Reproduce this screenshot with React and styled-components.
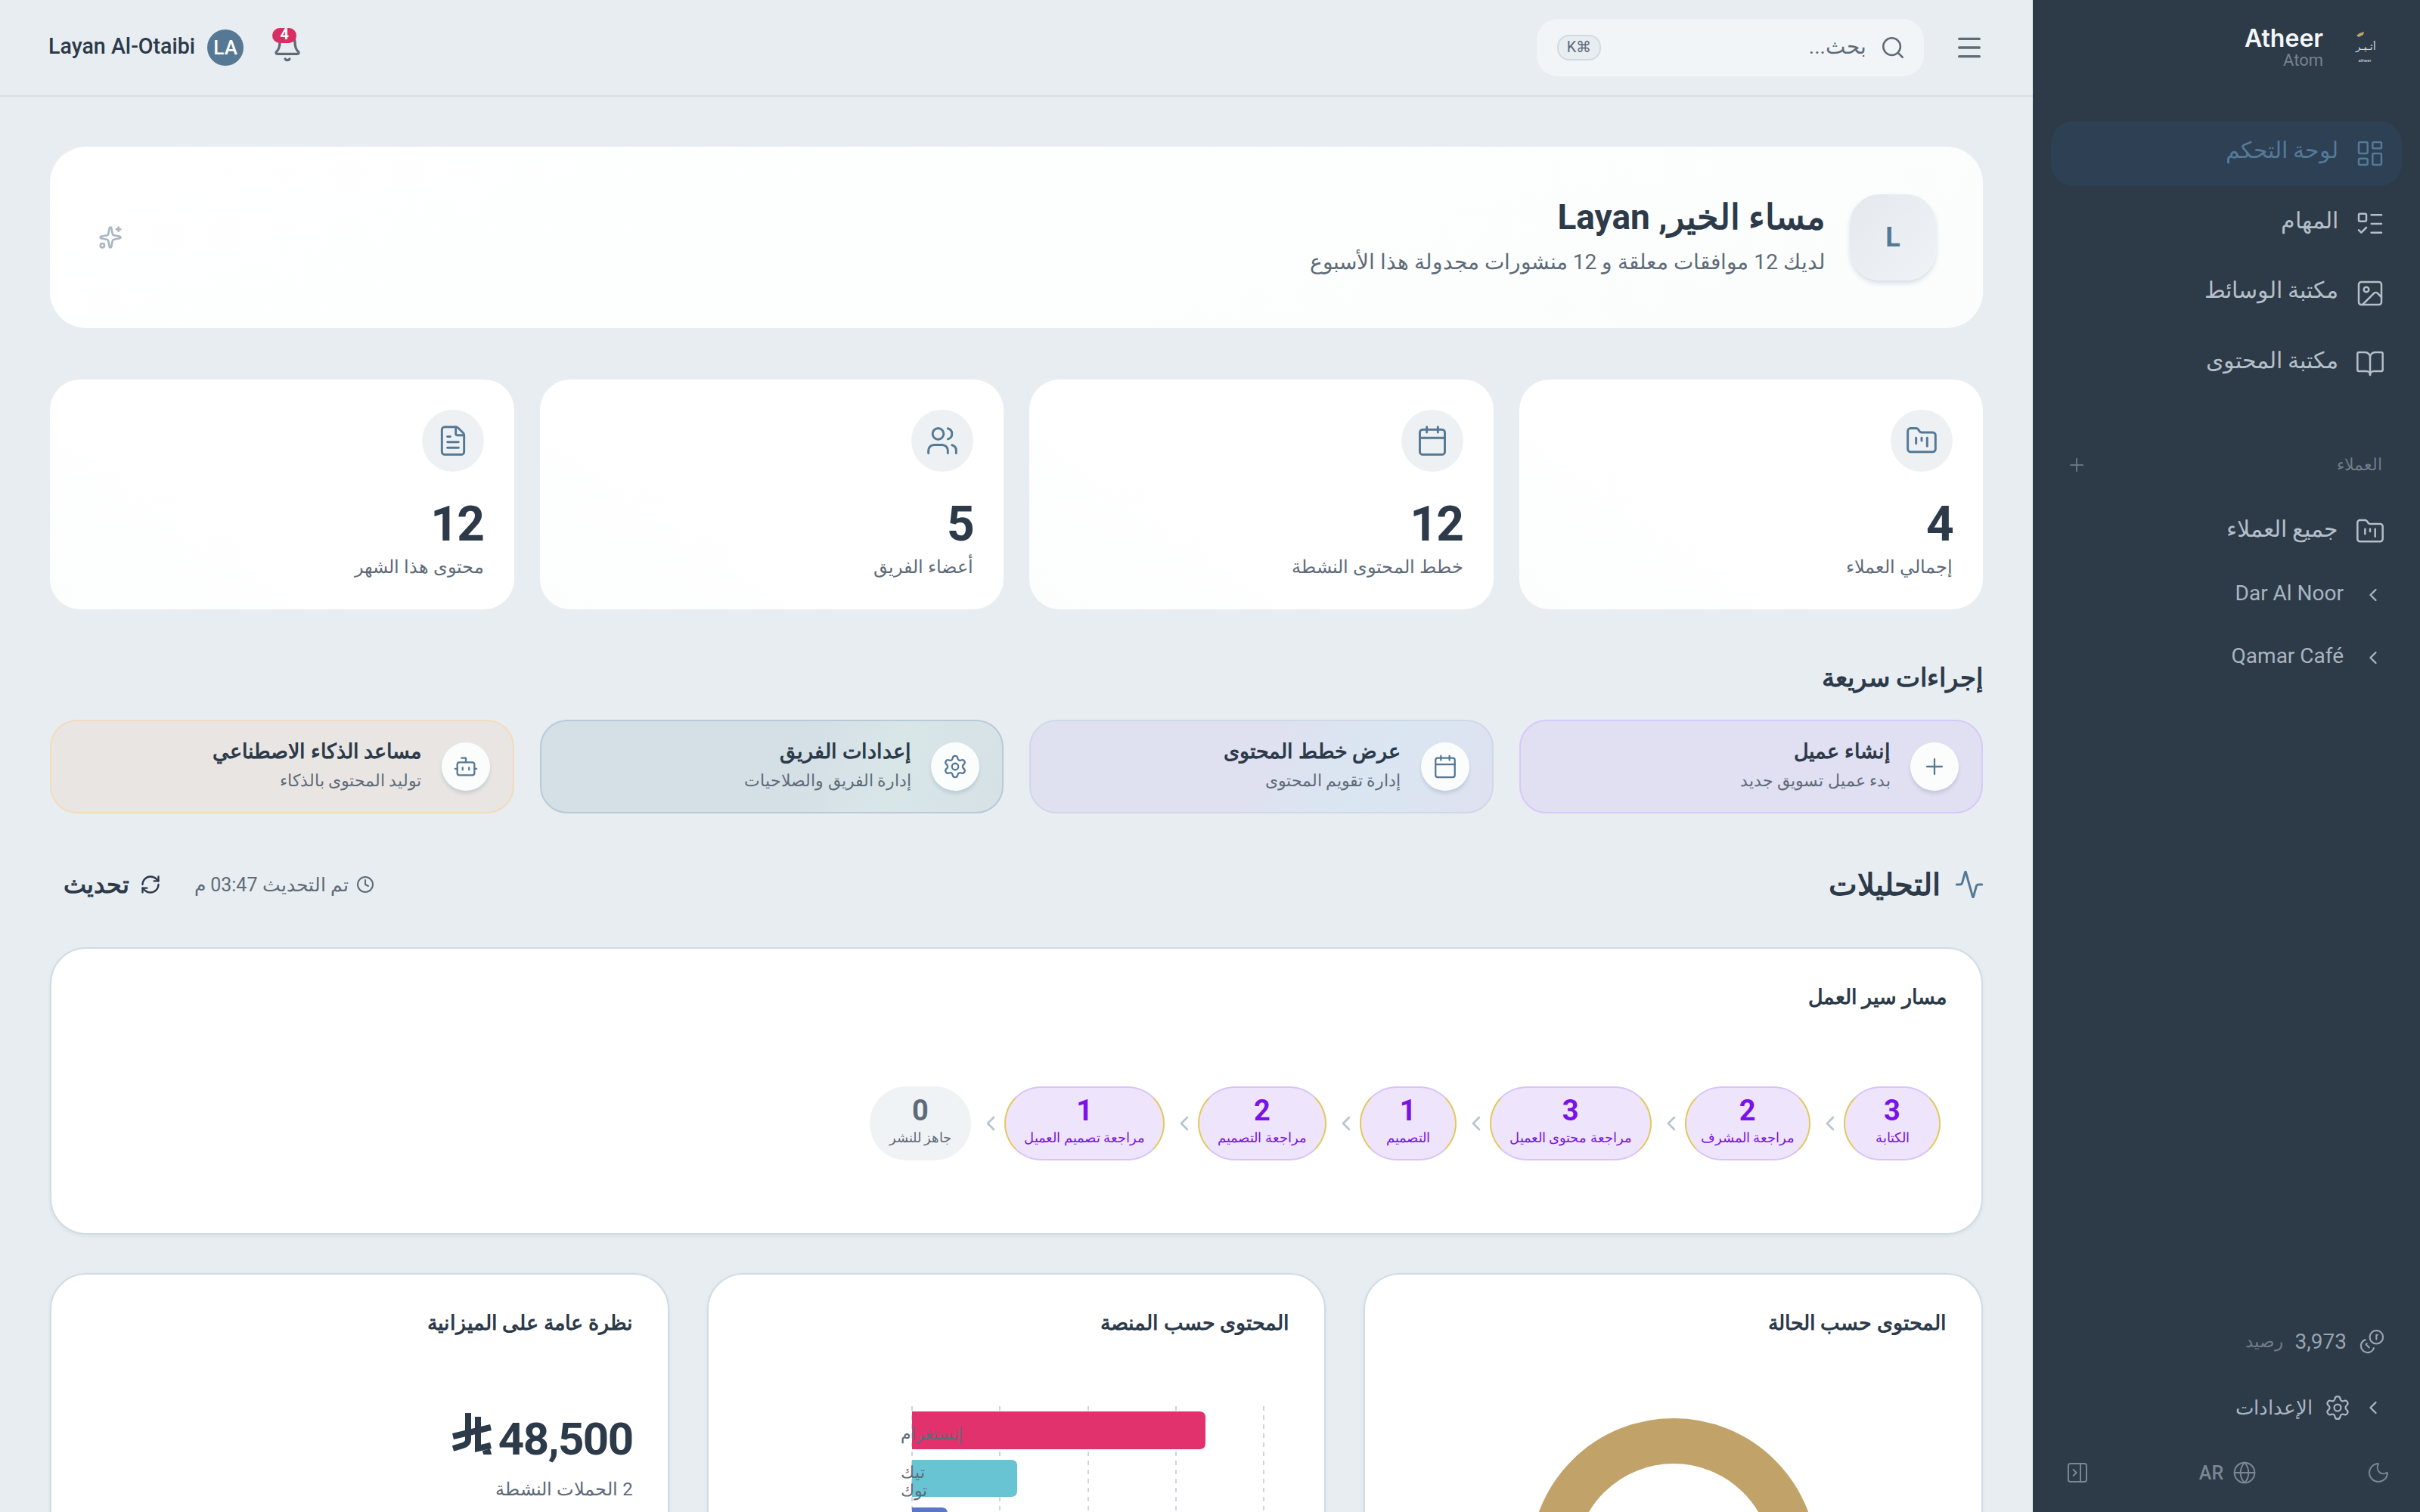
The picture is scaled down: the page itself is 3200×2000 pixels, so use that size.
import React from "react";
import styled, { createGlobalStyle } from "styled-components";
import {
  Activity, Bell, BookOpen, Bot, Calendar, ChevronLeft, Clock, Coins, FileText, FolderKanban,
  Globe, Image as ImageIcon, LayoutDashboard, ListTodo, Menu, Moon, PanelRightClose, Plus,
  RefreshCw, Search, Settings, Sparkles, Users,
} from "lucide-react";

const GlobalStyle = createGlobalStyle`
  html, body { margin: 0; padding: 0; }
  body {
    background: #e8edf1;
    color: #2c3a49;
    font-family: Roboto, sans-serif;
  }
  * { box-sizing: border-box; }
`;

const Shell = styled.div`
  direction: rtl;
  display: flex;
  width: 3200px;
  height: 2000px;
  overflow: hidden;
`;

/* sidebar */
const Sidebar = styled.aside`
  flex: 0 0 512px;
  display: flex;
  flex-direction: column;
  height: 100%;
  background: #2d3a48;
  color: #b4bfc8;
  padding: 0 24px;
`;
const Brand = styled.div`
  display: flex;
  align-items: flex-start;
  gap: 34px;
  height: 160px;
  padding: 36px 30px 0 0;
`;
const BrandText = styled.div`
  display: flex;
  flex-direction: column;
`;
const BrandName = styled.div`
  font-family: Inter, sans-serif;
  font-size: 32px;
  font-weight: 600;
  line-height: 30px;
  color: #f4f6f8;
`;
const BrandSub = styled.div`
  font-size: 22px;
  line-height: 26px;
  margin-top: 1px;
  color: #76838e;
`;
const NavList = styled.nav`
  display: flex;
  flex-direction: column;
  gap: 6.6px;
`;
const NavItem = styled.div`
  display: flex;
  align-items: center;
  gap: 22px;
  height: 86px;
  padding: 0 22px 0 0;
  border-radius: 30px;
  font-size: 29.5px;
  background: ${(p) => (p.$active ? "#2e4053" : "transparent")};
  color: ${(p) => (p.$active ? "#547a99" : "#b4bfc8")};
`;
const NavLabel = styled.span`
  margin-top: -8px;
`;
const ClientLabel = styled.span`
  margin-top: -6px;
`;
const GroupHead = styled.div`
  display: flex;
  align-items: center;
  justify-content: space-between;
  margin: 71px 0 25px;
  height: 40px;
  padding: 0 26px 0 20px;
  font-size: 22px;
  color: #6f7c88;
`;
const ClientRow = styled.div`
  display: flex;
  align-items: center;
  gap: 25px;
  height: 83px;
  padding-right: 24px;
  font-size: 28px;
  color: #a9b5c0;
`;
const SidebarBottom = styled.div`
  margin-top: auto;
  display: flex;
  flex-direction: column;
`;
const Credit = styled.div`
  display: flex;
  align-items: center;
  gap: 16px;
  padding-right: 22px;
  height: 40px;
  font-size: 28px;
  color: #98a4af;
`;
const CreditIcon = styled(Coins)`
  transform: scaleX(-1);
`;
const CreditLabel = styled.span`
  font-size: 23px;
  color: #6f7c88;
`;
const SettingsRow = styled.div`
  display: flex;
  align-items: center;
  gap: 15px;
  padding-right: 24px;
  margin-top: 48px;
  height: 40px;
  font-size: 26px;
  color: #a9b5c0;
`;
const SidebarFoot = styled.div`
  display: flex;
  align-items: center;
  justify-content: space-between;
  margin: 48px 0 34px;
  padding: 0 15px 0 19px;
  height: 36px;
  color: #7a8793;
`;
const LangSwitch = styled.div`
  display: flex;
  align-items: center;
  gap: 12px;
  font-size: 25px;
  font-weight: 500;
`;

/* main column */
const Main = styled.main`
  flex: 1;
  min-width: 0;
  display: flex;
  flex-direction: column;
`;
const Topbar = styled.header`
  flex: 0 0 128px;
  display: flex;
  align-items: center;
  justify-content: space-between;
  padding: 0 64px;
  border-bottom: 2px solid #d3dfe7;
`;
const TopRight = styled.div`
  display: flex;
  align-items: center;
  gap: 40px;
`;
const SearchBox = styled.div`
  display: flex;
  align-items: center;
  gap: 18px;
  width: 512px;
  height: 76px;
  padding: 0 24px 0 27px;
  border-radius: 28px;
  background: #f2f5f8;
  color: #5e6b78;
  font-size: 28px;
`;
const SearchText = styled.span`
  margin-top: -4px;
`;
const Kbd = styled.span`
  margin-right: auto;
  display: flex;
  justify-content: center;
  width: 58px;
  height: 34px;
  padding-top: 2px;
  border: 2px solid #cfdbe3;
  border-radius: 16px;
  background: #e8edf1;
  font-size: 20px;
  line-height: 24px;
`;
const TopUser = styled.div`
  display: flex;
  align-items: center;
  gap: 38px;
`;
const BellWrap = styled.div`
  position: relative;
  display: flex;
  width: 40px;
  height: 40px;
  color: #5e6b78;
`;
const BellBadge = styled.span`
  position: absolute;
  top: -6px;
  right: 8px;
  width: 32px;
  height: 20px;
  border-radius: 10px;
  background: #d92d63;
  color: #fff;
  font-size: 20px;
  font-weight: 700;
  line-height: 16px;
  text-align: center;
`;
const UserChip = styled.div`
  display: flex;
  align-items: center;
  gap: 16px;
  font-size: 28.6px;
  font-weight: 500;
`;
const UserName = styled.span`
  margin-top: -4px;
`;
const Avatar = styled.div`
  display: flex;
  align-items: center;
  justify-content: center;
  width: 48px;
  height: 48px;
  border-radius: 50%;
  background: #557894;
  color: #fff;
  font-size: 26px;
`;
const Content = styled.div`
  display: flex;
  flex-direction: column;
  padding: 66px 66px 0;
`;
const Hero = styled.section`
  display: flex;
  align-items: center;
  justify-content: space-between;
  height: 240px;
  padding: 0 62px 0 64px;
  border-radius: 48px;
  background: linear-gradient(160deg, #fff, #fbfdfd);
  color: #a9b6c4;
`;
const HeroMain = styled.div`
  display: flex;
  align-items: center;
  gap: 32px;
`;
const HeroBadge = styled.div`
  display: flex;
  align-items: center;
  justify-content: center;
  width: 114px;
  height: 114px;
  border-radius: 40px;
  background: linear-gradient(135deg, #e4e9ee, #eff3f6);
  box-shadow: 0 4px 6px rgba(85, 120, 148, 0.22);
  color: #557894;
  font-size: 36px;
  font-weight: 700;
`;
const HeroTitle = styled.h1`
  margin: -4px 0 0;
  font-size: 46px;
  font-weight: 700;
  line-height: 60px;
  color: #2c3a49;
`;
const HeroSub = styled.p`
  margin: 10px 0 0;
  font-size: 28.2px;
  line-height: 40px;
  color: #5e6b78;
`;
const StatGrid = styled.div`
  display: grid;
  grid-template-columns: repeat(4, 1fr);
  gap: 34px;
  margin-top: 68px;
`;
const StatCard = styled.div`
  height: 304px;
  padding: 40px;
  border-radius: 40px;
  background: linear-gradient(215deg, #fff 60%, #fcfdfd);
`;
const StatIcon = styled.div`
  display: flex;
  align-items: center;
  justify-content: center;
  width: 82px;
  height: 82px;
  border-radius: 50%;
  background: #edf1f4;
  color: #557894;
`;
const StatValue = styled.div`
  margin-top: 32px;
  font-size: 64px;
  font-weight: 700;
  letter-spacing: -0.025em;
  line-height: 76px;
`;
const StatLabel = styled.div`
  margin-top: -2px;
  font-size: 24px;
  line-height: 40px;
  color: #5e6b78;
`;
const SectionTitle = styled.h2`
  margin: 66px 0 32px;
  height: 48px;
  font-size: 34px;
  font-weight: 700;
  line-height: 48px;
`;
const ActionGrid = styled.div`
  display: grid;
  grid-template-columns: repeat(4, 1fr);
  gap: 34px;
`;
const ActionCard = styled.div`
  display: flex;
  align-items: center;
  gap: 26px;
  height: 124px;
  padding: 0 30px;
  border: 2px solid ${(p) => p.$border};
  border-radius: 36px;
  background: ${(p) => p.$bg};
`;
const ActionIcon = styled.div`
  flex: 0 0 64px;
  display: flex;
  align-items: center;
  justify-content: center;
  height: 64px;
  border-radius: 50%;
  background: #fbfcfc;
  box-shadow: 0 4px 4px rgba(85, 120, 148, 0.2);
  color: #557894;
`;
const ActionTitle = styled.div`
  margin-top: -4px;
  font-size: 26.5px;
  font-weight: 600;
  line-height: 36px;
`;
const ActionSub = styled.div`
  margin-top: 6px;
  font-size: 22px;
  line-height: 30px;
  color: #5e6b78;
`;
const AnalyticsHead = styled.div`
  display: flex;
  align-items: center;
  justify-content: space-between;
  height: 64px;
  margin: 62px 0 51px;
`;
const AnalyticsTitle = styled.div`
  display: flex;
  align-items: center;
  gap: 18px;
  margin-right: -2px;
  font-size: 40px;
  font-weight: 700;
  color: #2c3a49;
`;
const AnalyticsTools = styled.div`
  display: flex;
  align-items: center;
  gap: 44px;
  padding-left: 18px;
`;
const UpdatedAt = styled.div`
  display: flex;
  align-items: center;
  gap: 10px;
  font-size: 25px;
  color: #5e6b78;
`;
const RefreshButton = styled.div`
  display: flex;
  align-items: center;
  gap: 14px;
  font-size: 32px;
  font-weight: 600;
`;
const Panel = styled.section`
  padding: 48px 46px;
  border: 2px solid #d0dce4;
  border-radius: 48px;
  background: #fff;
  box-shadow: 0 2px 4px rgba(85, 120, 148, 0.1);
`;
const WorkflowPanel = styled(Panel)`
  height: 380px;
`;
const PanelTitle = styled.h3`
  margin: -2px 0 2px;
  font-size: 27px;
  font-weight: 600;
  line-height: 36px;
`;
const Pipeline = styled.div`
  display: flex;
  align-items: center;
  gap: 6px;
  margin-top: 100px;
  padding-right: 8px;
  color: #b7c5cf;
`;
const PipeArrow = styled(ChevronLeft)`
  margin: 0 -4px 0 4px;
`;
const Stage = styled.div`
  display: flex;
  flex-direction: column;
  align-items: center;
  justify-content: center;
  min-width: 128px;
  height: 98px;
  padding: 0 ${(p) => (p.$tight ? "19px" : "24px")} 6px;
  border: 2px solid ${(p) => (p.$muted ? "#f0f3f6" : "#d8c4fa")};
  border-left-color: ${(p) => (p.$muted ? "#f0f3f6" : "#e3c85c")};
  border-right-color: ${(p) => (p.$muted ? "#f0f3f6" : "#e3c85c")};
  border-radius: 49px;
  background: ${(p) => (p.$muted ? "#f0f3f6" : "#eee5fc")};
  color: ${(p) => (p.$muted ? "#5e6b78" : "#7a12e8")};
`;
const StageCount = styled.div`
  font-size: 38px;
  font-weight: 700;
  line-height: 44px;
`;
const StageLabel = styled.div`
  font-size: 18px;
  line-height: 28px;
`;
const BottomGrid = styled.div`
  display: grid;
  grid-template-columns: repeat(3, 1fr);
  gap: 50px;
  margin-top: 51px;
`;
const ChartPanel = styled(Panel)`
  height: 700px;
`;
const BudgetValue = styled.div`
  display: flex;
  align-items: center;
  gap: 8px;
  margin-top: 98px;
  font-size: 60px;
  font-weight: 700;
  letter-spacing: -0.025em;
  line-height: 76px;
`;
const BudgetSign = styled.svg`
  margin-bottom: 16px;
`;
const BudgetNote = styled.div`
  margin-top: 12px;
  font-size: 24px;
  line-height: 32px;
  color: #5e6b78;
`;
const ChartArea = styled.div`
  display: flex;
  justify-content: center;
  margin-top: ${(p) => p.$top}px;
  direction: ltr;
`;
const AxisLabel = styled.text`
  direction: rtl;
  font-size: 22px;
  fill: #5e6b78;
`;

const navItems = [
  { label: "لوحة التحكم", Icon: LayoutDashboard, active: true },
  { label: "المهام", Icon: ListTodo },
  { label: "مكتبة الوسائط", Icon: ImageIcon },
  { label: "مكتبة المحتوى", Icon: BookOpen },
];

const stats = [
  { label: "إجمالي العملاء", value: "4", Icon: FolderKanban },
  { label: "خطط المحتوى النشطة", value: "12", Icon: Calendar },
  { label: "أعضاء الفريق", value: "5", Icon: Users },
  { label: "محتوى هذا الشهر", value: "12", Icon: FileText },
];

const actions = [
  { title: "إنشاء عميل", sub: "بدء عميل تسويق جديد", Icon: Plus, bg: "#e1dff2", border: "#d8c8fb" },
  { title: "عرض خطط المحتوى", sub: "إدارة تقويم المحتوى", Icon: Calendar, bg: "linear-gradient(120deg, #dfe1f0 50%, #dae6f2 72%, #dfe1f0)", border: "#cfd8e8" },
  { title: "إعدادات الفريق", sub: "إدارة الفريق والصلاحيات", Icon: Settings, bg: "linear-gradient(105deg, #d4dfe6 55%, #d9e6e8 75%, #d5e1e6)", border: "#b8cad8" },
  { title: "مساعد الذكاء الاصطناعي", sub: "توليد المحتوى بالذكاء", Icon: Bot, bg: "#e9e5e2", border: "#f2dcbc" },
];

const stages = [
  { count: 3, label: "الكتابة" },
  { count: 2, label: "مراجعة المشرف", tight: true },
  { count: 3, label: "مراجعة محتوى العميل" },
  { count: 1, label: "التصميم" },
  { count: 2, label: "مراجعة التصميم" },
  { count: 1, label: "مراجعة تصميم العميل" },
  { count: 0, label: "جاهز للنشر", muted: true },
];

const AtheerLogo = () => (
  <svg width="40" height="50" viewBox="0 0 40 50">
    <path d="M10 11 L14 8 L20 6 L19 10 L13 13 Z" fill="#c1a36a" />
    <text x="36" y="30" fontSize="13" fill="#d6dbe0" direction="rtl">أثـيـر</text>
    <text x="21" y="46" fontSize="6" fill="#d6dbe0" textAnchor="middle" direction="ltr">atheer</text>
  </svg>
);

const RiyalSign = () => (
  <BudgetSign width="54" height="56" viewBox="0 0 54 56" fill="none" stroke="#2c3a49" strokeWidth="8">
    <path d="M22 1 V36 Q22 42 15 44 L2 48" />
    <path d="M35 6 V48 L52 44" />
    <path d="M2 32 L52 20" />
    <path d="M42 55 L52 52" />
  </BudgetSign>
);

const PlatformChart = () => (
  <svg width="722" height="240" viewBox="0 0 722 240">
    {[223, 339, 456, 572, 688].map((x) => (
      <line key={x} x1={x} x2={x} y1="0" y2="240" stroke="#ccd6dd" strokeWidth="2" strokeDasharray="6 6" />
    ))}
    <path d="M223 7 H603 Q611 7 611 15 V49 Q611 57 603 57 H223 Z" fill="#e1326d" />
    <path d="M223 71 H354 Q362 71 362 79 V112 Q362 120 354 120 H223 Z" fill="#68c4d3" />
    <path d="M223 134 H262 Q270 134 270 142 V184 H223 Z" fill="#5a76c9" />
    <AxisLabel x="208" y="44" textAnchor="end">إنستغرام</AxisLabel>
    <AxisLabel x="208" y="95" textAnchor="end">تيك</AxisLabel>
    <AxisLabel x="208" y="119" textAnchor="end">توك</AxisLabel>
  </svg>
);

const StatusChart = () => (
  <svg width="380" height="380" viewBox="0 0 380 380">
    <circle cx="190" cy="190" r="160" fill="none" stroke="#c1a36a" strokeWidth="60" />
  </svg>
);

export default function App() {
  return (
    <>
      <GlobalStyle />
      <Shell>
        <Sidebar>
          <Brand>
            <AtheerLogo />
            <BrandText>
              <BrandName>Atheer</BrandName>
              <BrandSub>Atom</BrandSub>
            </BrandText>
          </Brand>
          <NavList>
            {navItems.map(({ label, Icon, active }) => (
              <NavItem key={label} $active={active}>
                <Icon size={40} strokeWidth={1.5} />
                <NavLabel>{label}</NavLabel>
              </NavItem>
            ))}
          </NavList>
          <GroupHead>
            <span>العملاء</span>
            <Plus size={28} strokeWidth={1.5} />
          </GroupHead>
          <NavItem>
            <FolderKanban size={40} strokeWidth={1.5} />
            <ClientLabel>جميع العملاء</ClientLabel>
          </NavItem>
          <ClientRow>
            <ChevronLeft size={28} strokeWidth={2} />
            <ClientLabel>Dar Al Noor</ClientLabel>
          </ClientRow>
          <ClientRow>
            <ChevronLeft size={28} strokeWidth={2} />
            <ClientLabel>Qamar Café</ClientLabel>
          </ClientRow>
          <SidebarBottom>
            <Credit>
              <CreditIcon size={35} strokeWidth={1.5} />
              <span>3,973</span>
              <CreditLabel>رصيد</CreditLabel>
            </Credit>
            <SettingsRow>
              <ChevronLeft size={28} strokeWidth={2} />
              <Settings size={36} strokeWidth={1.5} />
              الإعدادات
            </SettingsRow>
            <SidebarFoot>
              <Moon size={32} strokeWidth={1.5} />
              <LangSwitch>
                <Globe size={32} strokeWidth={1.5} />
                AR
              </LangSwitch>
              <PanelRightClose size={32} strokeWidth={1.5} />
            </SidebarFoot>
          </SidebarBottom>
        </Sidebar>

        <Main>
          <Topbar>
            <TopRight>
              <Menu size={40} strokeWidth={2} color="#5e6b78" />
              <SearchBox>
                <Search size={34} strokeWidth={1.8} />
                <SearchText>بحث...</SearchText>
                <Kbd>⌘K</Kbd>
              </SearchBox>
            </TopRight>
            <TopUser>
              <BellWrap>
                <Bell size={40} strokeWidth={2} />
                <BellBadge>4</BellBadge>
              </BellWrap>
              <UserChip>
                <Avatar>LA</Avatar>
                <UserName>Layan Al-Otaibi</UserName>
              </UserChip>
            </TopUser>
          </Topbar>

          <Content>
            <Hero>
              <HeroMain>
                <HeroBadge>L</HeroBadge>
                <div>
                  <HeroTitle>مساء الخير, Layan</HeroTitle>
                  <HeroSub>لديك 12 موافقات معلقة و 12 منشورات مجدولة هذا الأسبوع</HeroSub>
                </div>
              </HeroMain>
              <Sparkles size={32} strokeWidth={2} />
            </Hero>

            <StatGrid>
              {stats.map(({ label, value, Icon }) => (
                <StatCard key={label}>
                  <StatIcon><Icon size={44} strokeWidth={1.6} /></StatIcon>
                  <StatValue>{value}</StatValue>
                  <StatLabel>{label}</StatLabel>
                </StatCard>
              ))}
            </StatGrid>

            <SectionTitle>إجراءات سريعة</SectionTitle>
            <ActionGrid>
              {actions.map(({ title, sub, Icon, bg, border }) => (
                <ActionCard key={title} $bg={bg} $border={border}>
                  <ActionIcon><Icon size={34} strokeWidth={1.6} /></ActionIcon>
                  <div>
                    <ActionTitle>{title}</ActionTitle>
                    <ActionSub>{sub}</ActionSub>
                  </div>
                </ActionCard>
              ))}
            </ActionGrid>

            <AnalyticsHead>
              <AnalyticsTitle>
                <Activity size={40} strokeWidth={1.8} color="#557894" />
                التحليلات
              </AnalyticsTitle>
              <AnalyticsTools>
                <UpdatedAt>
                  <Clock size={24} strokeWidth={2} />
                  تم التحديث 03:47 م
                </UpdatedAt>
                <RefreshButton>
                  <RefreshCw size={28} strokeWidth={2} />
                  تحديث
                </RefreshButton>
              </AnalyticsTools>
            </AnalyticsHead>

            <WorkflowPanel>
              <PanelTitle>مسار سير العمل</PanelTitle>
              <Pipeline>
                {stages.map((s, i) => (
                  <React.Fragment key={s.label}>
                    {i > 0 && <PipeArrow size={32} strokeWidth={2} />}
                    <Stage $muted={s.muted} $tight={s.tight}>
                      <StageCount>{s.count}</StageCount>
                      <StageLabel>{s.label}</StageLabel>
                    </Stage>
                  </React.Fragment>
                ))}
              </Pipeline>
            </WorkflowPanel>

            <BottomGrid>
              <ChartPanel>
                <PanelTitle>المحتوى حسب الحالة</PanelTitle>
                <ChartArea $top={108}><StatusChart /></ChartArea>
              </ChartPanel>
              <ChartPanel>
                <PanelTitle>المحتوى حسب المنصة</PanelTitle>
                <ChartArea $top={92}><PlatformChart /></ChartArea>
              </ChartPanel>
              <ChartPanel>
                <PanelTitle>نظرة عامة على الميزانية</PanelTitle>
                <BudgetValue>48,500<RiyalSign /></BudgetValue>
                <BudgetNote>2 الحملات النشطة</BudgetNote>
              </ChartPanel>
            </BottomGrid>
          </Content>
        </Main>
      </Shell>
    </>
  );
}
